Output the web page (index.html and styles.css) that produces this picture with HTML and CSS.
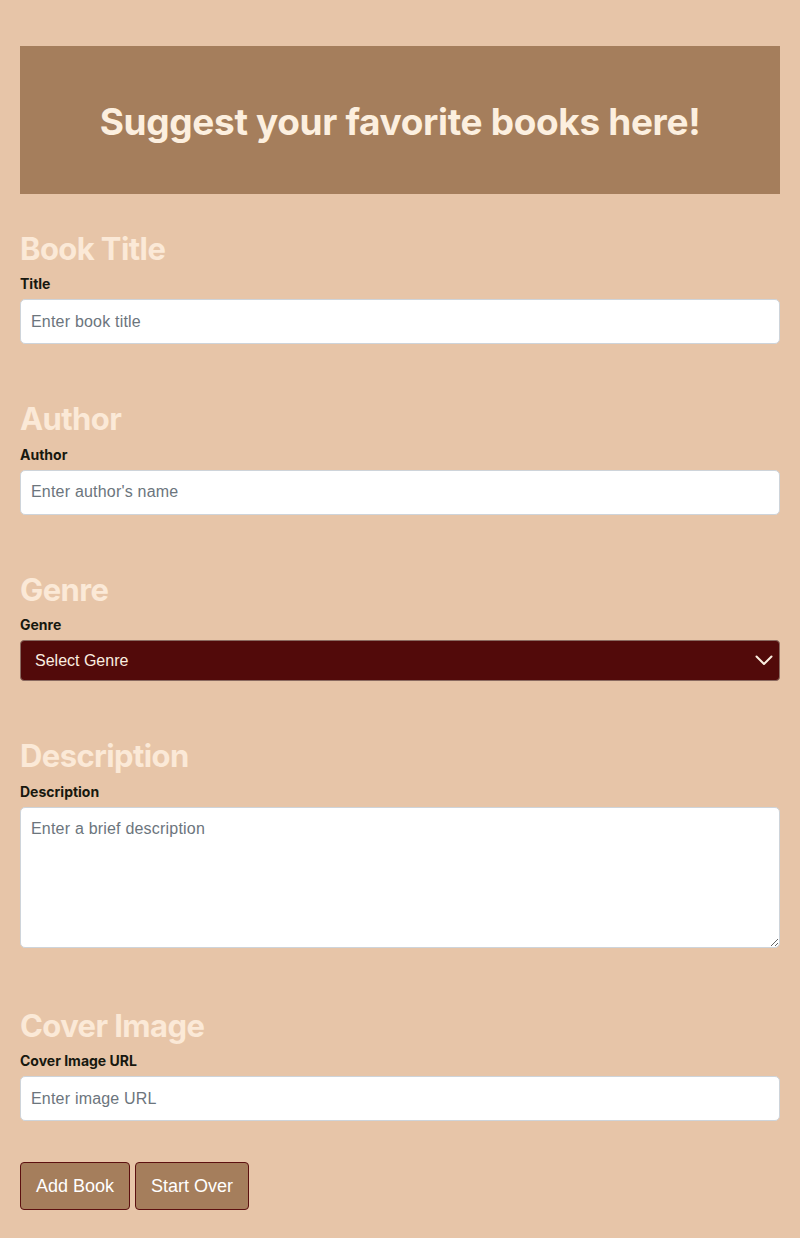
FILE: index.html
```html
<!DOCTYPE html>
<html lang="en">
<head>
<meta charset="utf-8">
<title>Suggest a Book</title>
<link rel="stylesheet" href="styles.css">
</head>
<body>
<div class="page">
  <header class="banner">
    <h1 class="banner-title">Suggest your favorite books here!</h1>
  </header>
  <form class="book-form">
    <section class="field-group">
      <h2 class="group-title">Book Title</h2>
      <label class="field-label" for="title">Title</label>
      <input class="field-input" id="title" type="text" placeholder="Enter book title">
    </section>
    <section class="field-group">
      <h2 class="group-title">Author</h2>
      <label class="field-label" for="author">Author</label>
      <input class="field-input" id="author" type="text" placeholder="Enter author's name">
    </section>
    <section class="field-group">
      <h2 class="group-title">Genre</h2>
      <label class="field-label" for="genre">Genre</label>
      <div class="select-wrap">
        <select class="field-select" id="genre">
          <option>Select Genre</option>
        </select>
        <svg class="select-chevron" width="18" height="11" viewBox="0 0 18 11"><polyline points="1.5,1.5 9,9 16.5,1.5" fill="none" stroke="#fbeee0" stroke-width="2" stroke-linecap="round" stroke-linejoin="round"/></svg>
      </div>
    </section>
    <section class="field-group">
      <h2 class="group-title">Description</h2>
      <label class="field-label" for="desc">Description</label>
      <textarea class="field-textarea" id="desc" placeholder="Enter a brief description"></textarea>
    </section>
    <section class="field-group">
      <h2 class="group-title">Cover Image</h2>
      <label class="field-label" for="cover">Cover Image URL</label>
      <input class="field-input" id="cover" type="text" placeholder="Enter image URL">
    </section>
    <div class="actions">
      <button class="btn" type="button">Add Book</button>
      <button class="btn" type="button">Start Over</button>
    </div>
  </form>
</div>
</body>
</html>
```
FILE: styles.css
```css
html, body {
  margin: 0;
  padding: 0;
  background: #e7c5a8;
}
body {
  font-family: "Liberation Sans", Arial, sans-serif;
  color: #1a1a10;
}
.page {
  padding: 46px 20px 28px;
}
.banner {
  height: 148px;
  background: #a57e5c;
  display: flex;
  align-items: center;
  justify-content: center;
}
.banner-title {
  margin: 4px 0 0;
  font-family: Inter, "Liberation Sans", sans-serif;
  font-weight: 700;
  font-size: 37px;
  letter-spacing: -0.35px;
  color: #fcefdf;
  line-height: 1.2;
}
.book-form {
  display: flex;
  flex-direction: column;
}
.field-group {
  display: flex;
  flex-direction: column;
  padding-top: 36px;
  margin-bottom: 20px;
}
.group-title {
  margin: 0 0 5px;
  font-family: Inter, "Liberation Sans", sans-serif;
  font-weight: 700;
  font-size: 31px;
  line-height: 38.4px;
  letter-spacing: -0.6px;
  color: #fbe9d7;
}
.field-label {
  font-family: Inter, "Liberation Sans", sans-serif;
  font-weight: 700;
  font-size: 14px;
  line-height: 21px;
  margin-bottom: 5px;
  color: #17180f;
}
.field-input,
.field-textarea {
  box-sizing: border-box;
  width: 100%;
  height: 45px;
  margin: 0;
  padding: 6px 10px;
  font-family: "Liberation Sans", Arial, sans-serif;
  font-size: 16px;
  letter-spacing: 0.2px;
  color: #212529;
  background: #fff;
  border: 1px solid #ced4da;
  border-radius: 5px;
  outline: none;
}
.field-textarea {
  display: block;
  height: 141px;
  padding: 9px 10px;
  line-height: 1.5;
  resize: vertical;
  margin-bottom: 3px;
}
.field-input::placeholder,
.field-textarea::placeholder {
  color: #6c757d;
}
.select-wrap {
  position: relative;
}
.field-select {
  box-sizing: border-box;
  width: 100%;
  height: 41px;
  margin: 0;
  padding: 0 40px 0 14px;
  appearance: none;
  -webkit-appearance: none;
  background: #520a0a;
  color: #fbeee0;
  font-family: "Liberation Sans", Arial, sans-serif;
  font-size: 16px;
  border: 1px solid #8a6a60;
  border-radius: 4px;
}
.select-chevron {
  position: absolute;
  right: 7px;
  top: 15px;
  pointer-events: none;
}
.actions {
  display: flex;
  gap: 5px;
  padding-top: 21px;
}
.btn {
  box-sizing: border-box;
  height: 48px;
  padding: 0 15px;
  background: #a57e5c;
  color: #fff;
  border: 1px solid #5c1010;
  border-radius: 4px;
  font-family: "Liberation Sans", Arial, sans-serif;
  font-size: 18px;
  line-height: 26px;
  cursor: pointer;
}
```
